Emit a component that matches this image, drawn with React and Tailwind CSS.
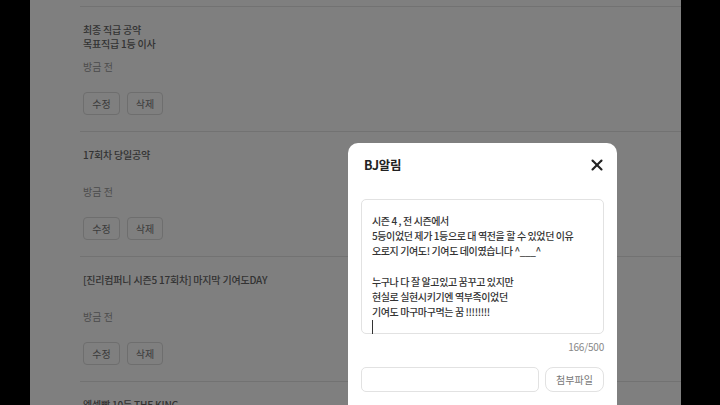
import { X } from "lucide-react";

const font = { fontFamily: '"Noto Sans CJK KR", "Noto Sans", sans-serif' };

const pledges = [
  { id: 1, lines: ["최종 직급 공약", "목표직급 1등 이사"] },
  { id: 2, lines: ["17회차 당일공약"] },
  { id: 3, lines: ["[진리컴퍼니 시즌5 17회차] 마지막 기여도DAY"] },
  { id: 4, lines: ["엑셀빵 10등 THE KING"] }
];

const message = `시즌 4 , 전 시즌에서
5등이었던 제가 1등으로 대 역전을 할 수 있었던 이유
오로지 기여도! 기여도 데이였습니다 ^___^

누구나 다 잘 알고있고 꿈꾸고 있지만
현실로 실현시키기엔 역부족이었던
기여도 마구마구먹는 꿈 !!!!!!!!`;

const PledgeItem = ({ item }) => (
  <div className="border-b border-[#e4e4e4] pl-[3px] pt-[16px] pb-[16px]">
    <div className="h-[28px] text-[10px] font-medium leading-[14px] tracking-[-0.2px] text-[#666]">
      {item.lines.map((line) => (
        <p key={line}>{line}</p>
      ))}
    </div>
    <p className="mt-[9px] text-[10px] leading-[14px] text-[#9a9a9a]">방금 전</p>
    <div className="mt-[18px] flex gap-[7px]">
      <button className="h-[23px] w-[37px] rounded-[4px] border border-[#dcdcdc] text-[10px] text-[#777]">
        수정
      </button>
      <button className="h-[23px] w-[36px] rounded-[4px] border border-[#dcdcdc] text-[10px] text-[#777]">
        삭제
      </button>
    </div>
  </div>
);

export default function App() {
  return (
    <div className="relative h-[405px] w-[720px] overflow-hidden bg-black" style={font}>
      <div className="ml-[30px] h-full w-[651px] bg-white">
        <div className="ml-[50px]">
          <div className="h-[7px] border-b border-[#e4e4e4]" />
          {pledges.map((item) => (
            <PledgeItem key={item.id} item={item} />
          ))}
        </div>
      </div>

      <div className="absolute inset-0 bg-black/50" />

      <div className="absolute left-[348px] top-[143px] h-[300px] w-[269px] rounded-[10px] bg-white px-[13px]">
        <div className="flex items-center justify-between pl-[3px] pt-[13px]">
          <h2 className="text-[12.5px] font-bold leading-[18px] tracking-[-0.3px] text-[#222]">BJ알림</h2>
          <X size={18} strokeWidth={2.8} className="-mr-[2px] text-[#222]" />
        </div>

        <div className="mt-[25px] h-[135px] rounded-[5px] border border-[#e2e2e2] px-[10px] pt-[13px]">
          <div className="whitespace-pre-line text-[10px] font-medium leading-[15.2px] tracking-[-0.4px] text-[#333]">
            {message}
          </div>
          <div className="mt-[1px] h-[14px] w-px bg-[#333]" />
        </div>

        <p className="mt-[6px] text-right text-[10px] leading-[14px] tracking-[-0.2px] text-[#888]">166/500</p>

        <div className="mt-[13px] flex gap-[6px]">
          <div className="h-[25px] flex-1 rounded-[5px] border border-[#e2e2e2]" />
          <button className="h-[25px] w-[59px] rounded-[8px] border border-[#e2e2e2] text-[10px] text-[#777]">
            첨부파일
          </button>
        </div>
      </div>
    </div>
  );
}
